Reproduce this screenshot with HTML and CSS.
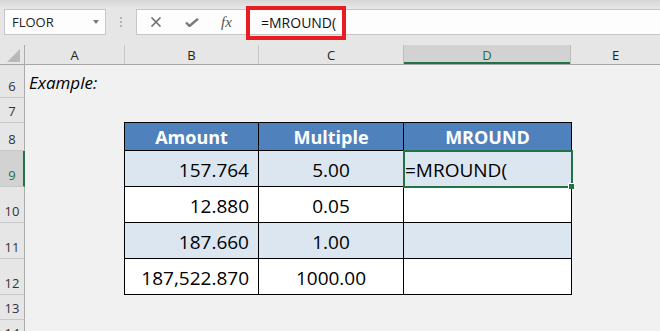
FILE: index.html
```html
<!DOCTYPE html>
<html lang="en">
<head>
  <meta charset="UTF-8" />
  <title>MROUND Example</title>
  <link rel="stylesheet" href="styles.css">
</head>
<body>
  <div class="toolbar">
    <div class="name-box">
      <span>FLOOR</span>
      <span class="drop-arrow"></span>
    </div>
    <div class="grip"><i></i><i></i><i></i></div>
    <div class="fx-buttons">
      <svg width="12" height="10" viewBox="0 0 12 10">
        <path d="M1.5 0.5l9 9M10.5 0.5l-9 9" stroke="#6f6f6f" stroke-width="1.6" fill="none"/>
      </svg>
      <svg width="14" height="9" viewBox="0 0 14 9">
        <path d="M1 4.5l3.5 3.5L13 0.8" stroke="#7a7a7a" stroke-width="2.4" fill="none"/>
      </svg>
      <span class="fx">fx</span>
    </div>
    <div class="formula">
      <span class="formula-text">=MROUND(</span>
      <span class="highlight"></span>
    </div>
  </div>

  <div class="col-headers">
    <div class="corner">
      <svg width="14" height="13" viewBox="0 0 14 13"><path d="M13 0V13H0z" fill="#b8b8b8"/></svg>
    </div>
    <div class="col-head col-a">A</div>
    <div class="col-head col-b">B</div>
    <div class="col-head col-c">C</div>
    <div class="col-head col-d selected">D</div>
    <div class="col-head col-e">E</div>
  </div>

  <div class="sheet">
    <div class="row-headers">
      <div class="row-head h33">6</div>
      <div class="row-head h25">7</div>
      <div class="row-head h28">8</div>
      <div class="row-head h36 selected">9</div>
      <div class="row-head h36">10</div>
      <div class="row-head h36">11</div>
      <div class="row-head h36">12</div>
      <div class="row-head h25">13</div>
      <div class="row-head h25">14</div>
    </div>
    <div class="cells">
      <div class="row h33"><div class="example">Example:</div></div>
      <div class="row h24"></div>
      <div class="data-table">
        <div class="th">Amount</div>
        <div class="th">Multiple</div>
        <div class="th">MROUND</div>

        <div class="td num band">157.764</div>
        <div class="td mid band">5.00</div>
        <div class="td text band active">=MROUND(</div>

        <div class="td num">12.880</div>
        <div class="td mid">0.05</div>
        <div class="td"></div>

        <div class="td num band">187.660</div>
        <div class="td mid band">1.00</div>
        <div class="td band"></div>

        <div class="td num">187,522.870</div>
        <div class="td mid">1000.00</div>
        <div class="td"></div>
      </div>
    </div>
  </div>
</body>
</html>
```

FILE: styles.css
```css
* {
  margin: 0;
  padding: 0;
  box-sizing: border-box;
  font-family: 'Open Sans', 'Liberation Sans', sans-serif;
}

body {
  width: 660px;
  height: 331px;
  overflow: hidden;
  background-color: #f1f1f1;
  color: #000000;
}

/* formula bar */
.toolbar {
  height: 45px;
  display: flex;
  align-items: flex-start;
  padding-top: 9px;
  background: linear-gradient(#d6d6d6 0px, #e6e6e6 8px, #e6e6e6 100%);
}

.name-box {
  width: 102px;
  height: 26px;
  margin-left: 4px;
  background-color: #fdfdfd;
  border: 1px solid #c6c6c6;
  display: flex;
  align-items: center;
  justify-content: space-between;
  padding: 0 6px 0 7px;
  font-size: 13px;
  color: #222222;
}

.drop-arrow {
  width: 0;
  height: 0;
  border-left: 3.5px solid transparent;
  border-right: 3.5px solid transparent;
  border-top: 4px solid #7a7a7a;
}

.grip {
  width: 30px;
  height: 26px;
  display: flex;
  flex-direction: column;
  align-items: center;
  justify-content: center;
  gap: 2px;
}

.grip i {
  width: 2px;
  height: 2px;
  background-color: #b3b3b3;
}

.fx-buttons {
  width: 110px;
  height: 26px;
  background-color: #fdfdfd;
  border: 1px solid #c6c6c6;
  border-right: none;
  display: flex;
  align-items: center;
  padding-left: 13px;
  gap: 23px;
}

.fx {
  font-family: 'Liberation Serif', serif;
  font-style: italic;
  font-size: 15px;
  color: #555555;
  margin-left: -1px;
}

.formula {
  position: relative;
  flex: 1;
  height: 26px;
  margin-right: -2px;
  background-color: #fdfdfd;
  border: 1px solid #c6c6c6;
  display: flex;
  align-items: center;
  padding-left: 14px;
}

.formula-text {
  font-size: 14px;
  color: #111111;
}

.highlight {
  position: absolute;
  left: -1px;
  top: -4px;
  width: 100px;
  height: 34px;
  border: 4px solid #e81c24;
}

/* column headers */
.col-headers {
  display: flex;
  height: 20px;
  background-color: #e6e6e6;
  border-bottom: 1px solid #a6a6a6;
}

.corner {
  width: 25px;
  border-right: 1px solid #ababab;
  display: flex;
  align-items: flex-end;
  justify-content: flex-end;
  padding: 0 3px 2px 0;
}

.col-head {
  border-right: 1px solid #c8c8c8;
  display: flex;
  align-items: center;
  justify-content: center;
  font-size: 13px;
  color: #222222;
}

.col-a { width: 100px; }
.col-b { width: 134px; }
.col-c { width: 145px; }
.col-d { width: 168px; }
.col-e { flex: 1; border-right: none; }

.col-head.selected {
  background-color: #d2d2d2;
  border-left: 1px solid #bdbdbd;
  border-right: 1px solid #bdbdbd;
  box-shadow: inset 0 -2px 0 #217346;
  color: #217346;
  margin-left: -1px;
}

/* sheet */
.sheet {
  display: flex;
}

.row-headers {
  width: 25px;
  display: flex;
  flex-direction: column;
}

.row-head {
  background-color: #e6e6e6;
  border-right: 1px solid #ababab;
  border-bottom: 1px solid #c8c8c8;
  display: flex;
  align-items: flex-end;
  justify-content: center;
  padding-bottom: 2px;
  font-size: 13px;
  color: #333333;
}

.row-head.selected {
  background-color: #d2d2d2;
  border-right: 2px solid #217346;
  color: #217346;
  padding-left: 1px;
}

.h24 { height: 24px; }
.h25 { height: 25px; }
.h28 { height: 28px; }
.h33 { height: 33px; }
.h36 { height: 36px; }

.cells {
  flex: 1;
  display: flex;
  flex-direction: column;
}

.example {
  font-style: italic;
  font-size: 17px;
  padding: 6px 0 0 4px;
}

.data-table {
  margin-left: 99px;
  width: 448px;
  display: grid;
  grid-template-columns: 134px 145px 168px;
  grid-template-rows: 28px 36px 36px 36px 36px;
  border-top: 1px solid #000000;
  border-left: 1px solid #000000;
}

.th,
.td {
  border-right: 1px solid #000000;
  border-bottom: 1px solid #000000;
  display: flex;
  align-items: center;
  font-size: 19px;
}

.th {
  background-color: #4f81bd;
  color: #ffffff;
  font-weight: bold;
  font-size: 18px;
  justify-content: center;
  padding-top: 1px;
}

.td {
  background-color: #ffffff;
  padding-top: 3px;
}

.td.band {
  background-color: #dce6f1;
}

.td.num {
  justify-content: flex-end;
  padding-right: 9px;
}

.td.mid {
  justify-content: center;
}

.td.text {
  padding-left: 1px;
}

.td.active {
  position: relative;
  outline: 2px solid #217346;
  outline-offset: -1px;
}

.td.active::after {
  content: "";
  position: absolute;
  right: -3px;
  bottom: -3px;
  width: 5px;
  height: 5px;
  background-color: #217346;
  border: 1px solid #ffffff;
  border-right: none;
  border-bottom: none;
}
```
